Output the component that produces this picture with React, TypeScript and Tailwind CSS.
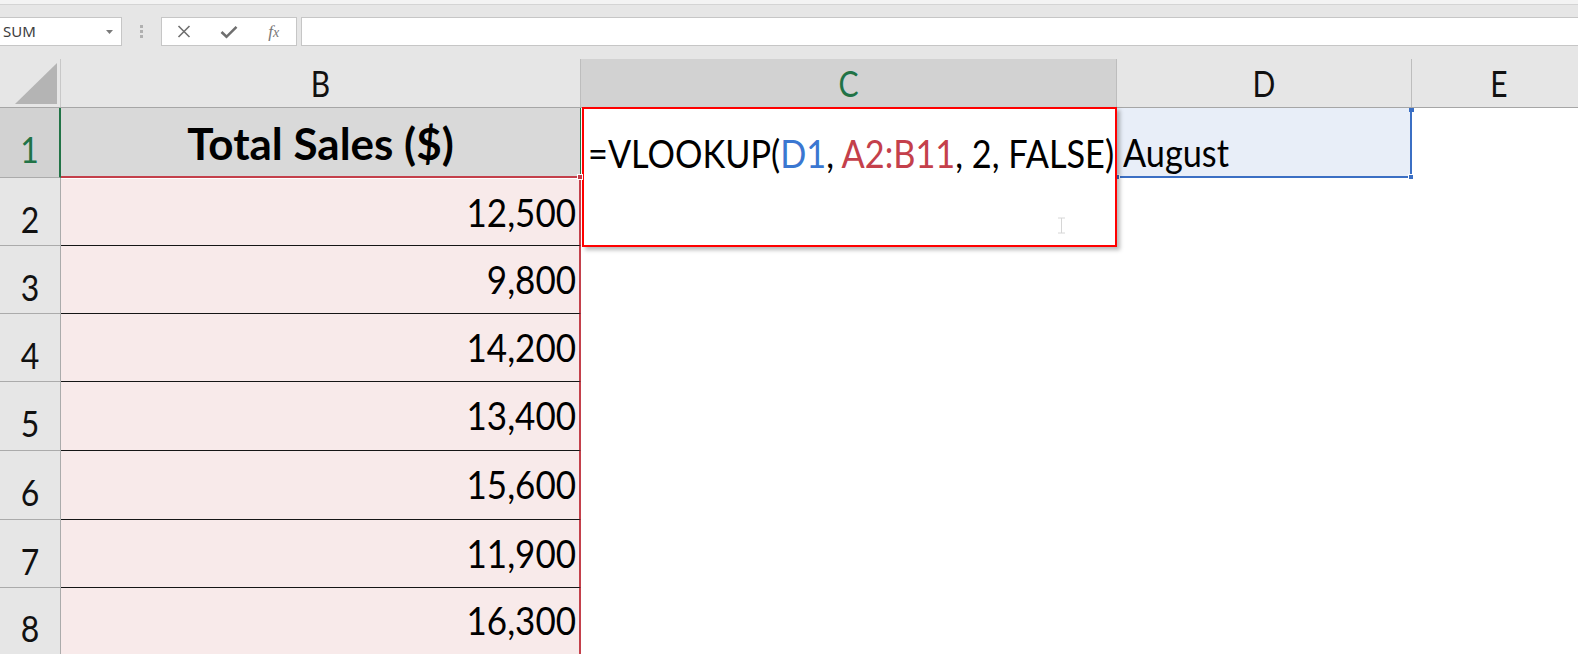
import React from "react";

const rows = [
  { h: "h-[68px]", n: "2", v: "12,500", extra: "border-t border-t-white" },
  { h: "h-[68px]", n: "3", v: "9,800", extra: "" },
  { h: "h-[68px]", n: "4", v: "14,200", extra: "" },
  { h: "h-[69px]", n: "5", v: "13,400", extra: "" },
  { h: "h-[69px]", n: "6", v: "15,600", extra: "" },
  { h: "h-[68px]", n: "7", v: "11,900", extra: "" },
  { h: "h-[80px]", n: "8", v: "16,300", extra: "" },
];

export default function App() {
  return (
    <div className="w-[1578px] h-[654px] overflow-hidden bg-white font-['Lato',sans-serif] text-[#111]">
      {/* top strip */}
      <div className="h-[5px] bg-[#f3f3f3] border-b border-[#d4d4d4]" />
      {/* formula bar */}
      <div className="h-[54px] bg-[#e6e6e6] flex items-start pt-[12px]">
        <div className="w-[122px] h-[29px] bg-white border border-l-0 border-[#c6c6c6] flex items-center justify-between pl-[3px] pr-[8px]">
          <span className="font-['Noto_Sans',sans-serif] text-[15px] leading-none text-[#3c3c3c]">SUM</span>
          <svg width="7" height="4" viewBox="0 0 7 4">
            <polygon points="0,0 7,0 3.5,4" fill="#7a7a7a" />
          </svg>
        </div>
        <div className="w-[39px] h-[29px] flex flex-col items-center justify-center gap-[2px]">
          <div className="w-[3px] h-[3px] bg-[#b0b0b0]" />
          <div className="w-[3px] h-[3px] bg-[#b0b0b0]" />
          <div className="w-[3px] h-[3px] bg-[#b0b0b0]" />
        </div>
        <div className="w-[136px] h-[29px] bg-white border border-[#c6c6c6] flex">
          <div className="w-[45px] h-full flex items-center justify-center">
            <svg width="14" height="13" viewBox="0 0 14 13">
              <path d="M1.5 1 L12.5 12 M12.5 1 L1.5 12" stroke="#6f6f6f" strokeWidth="1.6" fill="none" />
            </svg>
          </div>
          <div className="w-[45px] h-full flex items-center justify-center">
            <svg width="18" height="14" viewBox="0 0 18 14">
              <path d="M1.5 7 L6.5 11.8 L16.5 1.8" stroke="#6f6f6f" strokeWidth="2.6" fill="none" />
            </svg>
          </div>
          <div className="w-[45px] h-full flex items-center justify-center">
            <span className="font-['Liberation_Serif',serif] italic text-[17px] leading-none text-[#777]">
              f<span className="text-[14px]">x</span>
            </span>
          </div>
        </div>
        <div className="ml-[4px] flex-1 h-[29px] bg-white border border-r-0 border-[#c6c6c6]" />
      </div>

      {/* column headers */}
      <div className="h-[49px] flex bg-[#e6e6e6] border-b border-[#a6a6a6]">
        <div className="w-[61px] shrink-0 border-r border-[#c8c8c8] relative">
          <svg className="absolute left-0 top-0" width="60" height="48" viewBox="0 0 60 48">
            <polygon points="57,4 57,45 15,45" fill="#b4b4b4" />
          </svg>
        </div>
        <div className="w-[520px] shrink-0 border-r border-[#bdbdbd] flex justify-center">
          <span className="inline-block mt-[9px] text-[30px] leading-[30px] scale-y-[1.2]">B</span>
        </div>
        <div className="w-[536px] shrink-0 bg-[#d2d2d2] border-r border-[#bdbdbd] flex justify-center">
          <span className="inline-block mt-[9px] text-[30px] leading-[30px] scale-y-[1.2] text-[#217346]">C</span>
        </div>
        <div className="w-[295px] shrink-0 border-r border-[#bdbdbd] flex justify-center">
          <span className="inline-block mt-[9px] text-[30px] leading-[30px] scale-y-[1.2]">D</span>
        </div>
        <div className="w-[174px] shrink-0 flex justify-center">
          <span className="inline-block mt-[9px] text-[30px] leading-[30px] scale-y-[1.2]">E</span>
        </div>
      </div>

      {/* row 1 */}
      <div className="h-[70px] flex">
        <div className="w-[61px] shrink-0 bg-[#d2d2d2] border-r-2 border-r-[#217346] border-b border-b-[#ababab] flex justify-center">
          <span className="inline-block mt-[26px] text-[32px] leading-[32px] scale-y-[1.12] text-[#217346]">1</span>
        </div>
        <div className="w-[520px] shrink-0 bg-[#d9d9d9] border-b-2 border-b-[#c4404b] border-r border-r-[#217346] flex justify-center">
          <span className="mt-[13px] text-[44px] leading-[44px] font-bold text-black">Total Sales ($)</span>
        </div>
        <div className="w-[536px] shrink-0 relative">
          <div className="absolute left-[-4px] top-[66px] w-[6px] h-[6px] bg-[#c4404b] border border-white z-20" />
          <div className="absolute left-[1px] top-[-1px] w-[535px] h-[140px] border-2 border-[#ff0000] bg-white shadow-[3px_3px_4px_rgba(0,0,0,0.28)] z-10">
            <div className="pl-[4px] pt-[26px]">
              <span className="inline-block text-[34.3px] leading-[35px] scale-y-[1.12] origin-center whitespace-nowrap text-black">
                =VLOOKUP(<span className="text-[#3a77d1]">D1</span>, <span className="text-[#c4404b]">A2:B11</span>, 2, FALSE)
              </span>
            </div>
            <svg className="absolute left-[473px] top-[108px]" width="9" height="17" viewBox="0 0 9 17">
              <path d="M1 1 H8 M4.5 1 V16 M1 16 H8" stroke="#d6d6d6" strokeWidth="1" fill="none" />
            </svg>
          </div>
        </div>
        <div className="w-[295px] shrink-0 relative bg-[#e8eef8] border-b-2 border-r-2 border-[#3b6fc4]">
          <div className="pl-[6px] pt-[26px]">
            <span className="inline-block text-[34.3px] leading-[35px] scale-y-[1.12] text-black">August</span>
          </div>
          <div className="absolute right-[-4px] top-[0px] w-[5px] h-[4px] bg-[#3b6fc4]" />
          <div className="absolute right-[-4px] bottom-[-4px] w-[6px] h-[6px] bg-[#3b6fc4] border border-white" />
          <div className="absolute left-[-3px] bottom-[-4px] w-[6px] h-[6px] bg-[#3b6fc4] border border-white" />
        </div>
        <div className="flex-1" />
      </div>

      {/* data rows */}
      {rows.map((r) => (
        <div key={r.n} className={`${r.h} flex`}>
          <div className="w-[61px] shrink-0 bg-[#e6e6e6] border-r border-b border-[#ababab] flex justify-center">
            <span className="inline-block mt-[26px] text-[32px] leading-[32px] scale-y-[1.12]">{r.n}</span>
          </div>
          <div className={`w-[520px] shrink-0 bg-[#f8eaea] border-b border-b-[#151515] border-r-2 border-r-[#c4404b] flex justify-end pr-[3px] ${r.extra}`}>
            <span className="inline-block mt-[16px] text-[35px] leading-[35px] scale-y-[1.12] text-black">{r.v}</span>
          </div>
          <div className="flex-1" />
        </div>
      ))}
    </div>
  );
}
